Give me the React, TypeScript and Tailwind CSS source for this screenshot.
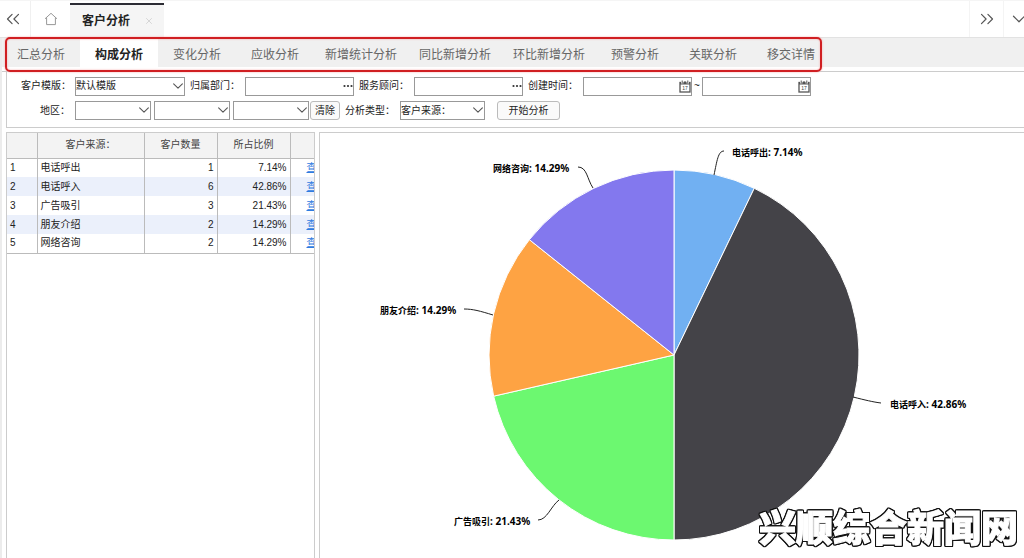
import type { ReactNode } from "react";
import { ChevronDown, ChevronsLeft, ChevronsRight, X } from "lucide-react";

const SUB_TABS = [
  "汇总分析",
  "构成分析",
  "变化分析",
  "应收分析",
  "新增统计分析",
  "同比新增分析",
  "环比新增分析",
  "预警分析",
  "关联分析",
  "移交详情",
];
const ACTIVE_SUB_TAB = "构成分析";

const ROWS = [
  { source: "电话呼出", count: 1, ratio: "7.14%" },
  { source: "电话呼入", count: 6, ratio: "42.86%" },
  { source: "广告吸引", count: 3, ratio: "21.43%" },
  { source: "朋友介绍", count: 2, ratio: "14.29%" },
  { source: "网络咨询", count: 2, ratio: "14.29%" },
];

const SLICE_COLORS = ["#71b0f2", "#444348", "#6cf870", "#fea343", "#8378ee"];

// label anchor and leader line for each slice, same order as ROWS
const CALLOUTS = [
  { x: 412, y: 23, line: "M394 42 C397 28 398 18 404 18" },
  { x: 570, y: 275, line: "M533 264 C545 267 553 269 561 270" },
  { x: 134, y: 392, line: "M239 367 C231 373 227 387 218 387" },
  { x: 60, y: 181, line: "M173 182 C160 178 153 176 144 176" },
  { x: 173, y: 39, line: "M273 55 C267 46 267 34 258 34" },
];

const PIE = { cx: 354, cy: 222, r: 185 };

export default function App() {
  return (
    <div className="relative flex min-h-screen flex-col overflow-hidden bg-white font-['Liberation_Sans','Noto_Sans_CJK_SC',sans-serif] text-[10px] leading-4 text-[#222]">
      <TopBar />
      <div className="flex flex-1 flex-col border-l-2 border-[#ececec]">
        <SubNav />
        <div className="flex flex-1 flex-col pl-1">
          <Filters />
          <main className="mt-1 flex flex-1 items-stretch gap-1">
            <SourceTable />
            <PieChart />
          </main>
        </div>
      </div>
      <p className="absolute right-1.5 bottom-1 font-['Noto_Sans_CJK_SC',sans-serif] text-[37px] leading-[56px] font-black whitespace-nowrap text-white [-webkit-text-stroke:1px_#fff] [filter:drop-shadow(1px_0_0_#111)_drop-shadow(-1px_0_0_#111)_drop-shadow(0_1px_0_#111)_drop-shadow(0_-1px_0_#111)]">
        兴顺综合新闻网
      </p>
    </div>
  );
}

function TopBar() {
  return (
    <header className="flex h-[38px] items-stretch border-t border-b border-t-[#f5f5f5] border-b-[#e2e2e2] text-[#555]">
      <button aria-label="向左滚动" className="flex w-[31px] items-center justify-center border-r border-[#f0f0f0] pr-1">
        <ChevronsLeft className="h-[22px] w-[22px] shrink-0" strokeWidth={1.3} />
      </button>
      <button aria-label="首页" className="flex w-[39px] items-center justify-center">
        <svg viewBox="0 0 14 14" className="h-3.5 w-3.5" fill="none" stroke="#999" strokeWidth="1">
          <path d="M1 6.8 7 1.3l6 5.5M2.6 5.6v7h8.8v-7" />
        </svg>
      </button>
      <div className="mt-0.5 flex w-[94px] items-center border-t-2 border-[#2c2c34] bg-[#f5f5f5] pl-3">
        <span className="text-xs font-bold text-[#222]">客户分析</span>
        <button aria-label="关闭" className="ml-3.5">
          <X className="h-2.5 w-2.5" color="#cfcfcf" strokeWidth={2} />
        </button>
      </div>
      <button aria-label="向右滚动" className="ml-auto flex w-[35px] items-center justify-center border-x border-[#f4f4f4]">
        <ChevronsRight className="h-[22px] w-[22px] shrink-0" strokeWidth={1.3} />
      </button>
      <button aria-label="更多" className="flex w-5 items-center overflow-hidden pl-1">
        <ChevronDown className="h-[22px] w-[22px] shrink-0" strokeWidth={1.3} />
      </button>
    </header>
  );
}

function SubNav() {
  return (
    <nav className="relative border-b border-[#ccc] pb-1">
      <ul className="flex h-[29px] items-stretch bg-[#f0f0f0] text-xs">
        {SUB_TABS.map((tab) => (
          <li key={tab} className={tab.length > 4 ? "w-[94px]" : "w-[78px]"}>
            <a
              href="#"
              className={
                tab === ACTIVE_SUB_TAB
                  ? "flex h-full items-center justify-center bg-white pt-1 font-bold text-[#222]"
                  : "flex h-full items-center justify-center pt-1 text-[#666]"
              }
            >
              {tab}
            </a>
          </li>
        ))}
      </ul>
      <div className="pointer-events-none absolute -top-px left-[3px] h-[35px] w-[817px] rounded-[5px] border-2 border-[#d01f22] shadow-[0_0_2px_#f5a0a0,inset_0_0_2px_#f5a0a0]" />
    </nav>
  );
}

function Filters() {
  return (
    <form className="flex flex-col gap-1.5 border-b border-l border-[#ccc] pt-[5px] pb-[7px] pl-3.5">
      <div className="flex h-[18px] items-center">
        <Label htmlFor="template">客户模版：</Label>
        <Select id="template" width="w-[110px]" value="默认模版" />
        <Label htmlFor="department">归属部门：</Label>
        <TextBox id="department" adornment={<Dots />} />
        <Label htmlFor="advisor">服务顾问：</Label>
        <TextBox id="advisor" adornment={<Dots />} />
        <Label htmlFor="date-from">创建时间：</Label>
        <TextBox id="date-from" adornment={<CalendarIcon />} />
        <span className="w-2.5 text-center">~</span>
        <TextBox id="date-to" label="结束时间" adornment={<CalendarIcon />} />
      </div>
      <div className="flex h-[19px] items-center">
        <Label htmlFor="province">地区：</Label>
        <div className="flex gap-[3px]">
          <Select id="province" width="w-[76px]" />
          <Select id="city" label="城市" width="w-[76px]" />
          <Select id="district" label="区县" width="w-[76px]" />
        </div>
        <button type="button" className="ml-px h-[19px] w-[30px] rounded-[3px] border border-[#bbb] bg-[#fafafa]">
          清除
        </button>
        <Label htmlFor="kind">分析类型：</Label>
        <Select id="kind" width="w-[85px]" value="客户来源：" />
        <button type="button" className="ml-3 h-[19px] w-[63px] rounded-[3px] border border-[#bbb] bg-[#fafafa]">
          开始分析
        </button>
      </div>
    </form>
  );
}

function Label({ htmlFor, children }: { htmlFor: string; children: ReactNode }) {
  return (
    <label htmlFor={htmlFor} className="w-[60px] shrink-0 pr-[5px] text-right whitespace-nowrap first:w-[54px]">
      {children}
    </label>
  );
}

function Select({
  id,
  width,
  label,
  value = "",
}: {
  id: string;
  width: string;
  label?: string;
  value?: string;
}) {
  return (
    <div className={`relative ${width}`}>
      <select
        id={id}
        aria-label={label}
        className="block h-[19px] w-full appearance-none border border-[#999] bg-white pr-4 leading-4"
      >
        <option>{value}</option>
      </select>
      <ChevronDown
        className="pointer-events-none absolute top-0.5 right-0 h-3.5 w-3.5 scale-125"
        color="#555"
        strokeWidth={1.5}
      />
    </div>
  );
}

function TextBox({ id, label, adornment }: { id: string; label?: string; adornment: ReactNode }) {
  return (
    <div className="relative w-[109px]">
      <input
        id={id}
        type="text"
        aria-label={label}
        className="block h-[19px] w-full border border-[#999] bg-white px-1 pr-4"
      />
      <button type="button" aria-label="选择" className="absolute inset-y-0 right-px flex items-center">
        {adornment}
      </button>
    </div>
  );
}

function Dots() {
  return (
    <svg viewBox="0 0 10 4" className="h-1 w-2.5" fill="#333">
      <circle cx="1.5" cy="2" r="1.1" />
      <circle cx="5" cy="2" r="1.1" />
      <circle cx="8.5" cy="2" r="1.1" />
    </svg>
  );
}

function CalendarIcon() {
  return (
    <svg viewBox="0 0 12 13" className="h-[13px] w-3">
      <rect x="1" y="2.5" width="10" height="9.5" fill="#fff" stroke="#555" strokeWidth="1.3" />
      <path d="M1 3.5h10" stroke="#555" strokeWidth="2" />
      <path d="M3.2 0.5v3M8.8 0.5v3" stroke="#fff" strokeWidth="2.4" />
      <path d="M3.2 0.5v3M8.8 0.5v3M6 1v2" stroke="#555" strokeWidth="1" />
      <text x="6" y="10.2" fontSize="5" textAnchor="middle" fill="#444">
        17
      </text>
    </svg>
  );
}

function SourceTable() {
  return (
    <section className="w-[309px] shrink-0 overflow-hidden border border-b-0 border-[#ccc]">
      <table className="w-[343px] table-fixed border-collapse">
        <thead>
          <tr className="h-[25px] border-b border-[#bbb] bg-[#f3f3f3] text-[#444]">
            <th className="w-[30px] border-r border-[#bbb]" />
            <th className="w-[107px] border-r border-[#bbb] font-normal">客户来源：</th>
            <th className="w-[73px] border-r border-[#bbb] font-normal">客户数量</th>
            <th className="w-[73px] border-r border-[#bbb] font-normal">所占比例</th>
            <th className="w-[60px]" />
          </tr>
        </thead>
        <tbody className="border-b border-[#bbb]">
          {ROWS.map((row, index) => (
            <tr key={row.source} className="h-[19px] even:bg-[#ebf0fb]">
              <td className="border-r border-[#bbb] pl-[3px]">{index + 1}</td>
              <td className="border-r border-[#bbb] pl-[3px]">{row.source}</td>
              <td className="border-r border-[#bbb] pr-[3px] text-right">{row.count}</td>
              <td className="border-r border-[#bbb] pr-[3px] text-right">{row.ratio}</td>
              <td className="pl-4">
                <a href="#" className="text-[#2f7be0] underline">
                  查看
                </a>
              </td>
            </tr>
          ))}
        </tbody>
      </table>
    </section>
  );
}

function slicePath(start: number, end: number) {
  const { cx, cy, r } = PIE;
  const point = (turn: number) => {
    const angle = turn * Math.PI * 2;
    return `${cx + r * Math.sin(angle)} ${cy - r * Math.cos(angle)}`;
  };
  return `M${cx} ${cy}L${point(start)}A${r} ${r} 0 ${end - start > 0.5 ? 1 : 0} 1 ${point(end)}Z`;
}

function PieChart() {
  const total = ROWS.reduce((sum, row) => sum + row.count, 0);
  let offset = 0;
  const slices = ROWS.map((row, index) => {
    const start = offset / total;
    offset += row.count;
    return { ...row, ...CALLOUTS[index], color: SLICE_COLORS[index], path: slicePath(start, offset / total) };
  });

  return (
    <section className="min-w-0 flex-1 border-t border-l border-[#ccc]">
      <svg viewBox="0 0 704 424" className="block h-auto w-full" role="img" aria-label="客户来源">
        {slices.map((slice) => (
          <g key={slice.source}>
            <path d={slice.path} fill={slice.color} stroke="#fff" strokeWidth="1" />
            <path d={slice.line} fill="none" stroke="#222" strokeWidth="1" />
            <text
              x={slice.x}
              y={slice.y}
              className="fill-black font-['Noto_Sans','Noto_Sans_CJK_SC',sans-serif] text-[9px] font-bold"
            >
              {slice.source}
              <tspan className="text-[10px]">: {slice.ratio}</tspan>
            </text>
          </g>
        ))}
      </svg>
    </section>
  );
}
